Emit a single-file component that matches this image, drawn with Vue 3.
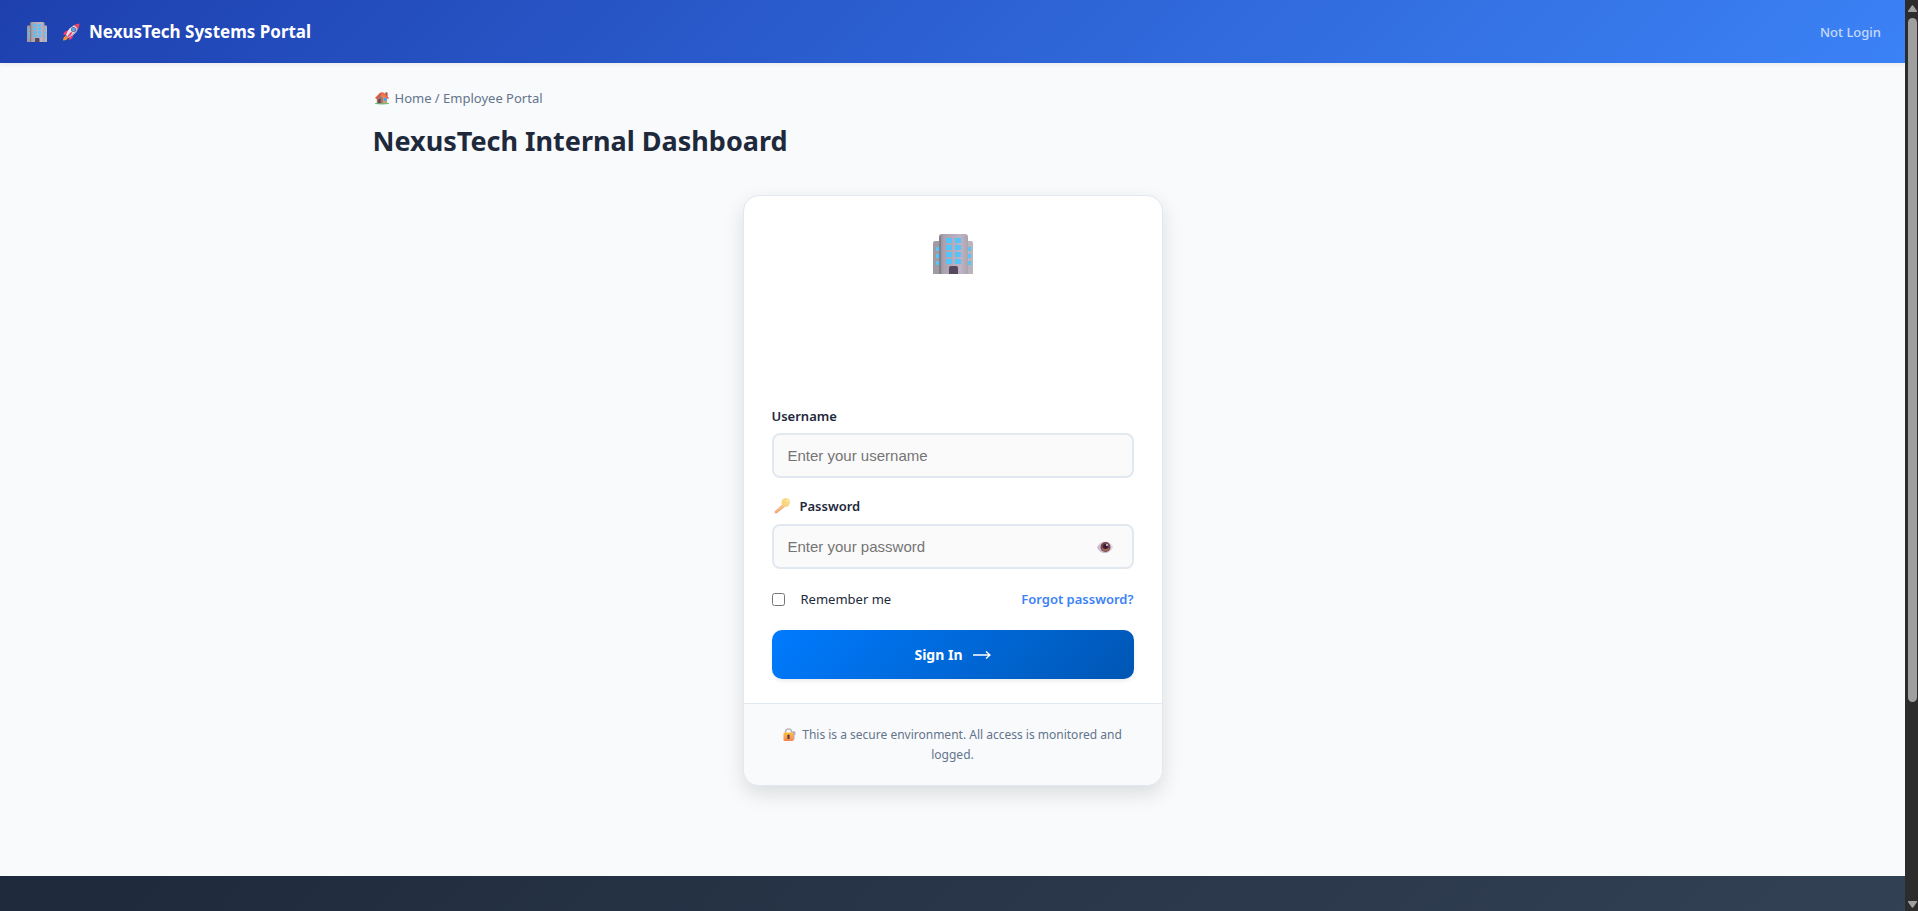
<script setup>
import { ref } from 'vue'

const username = ref('')
const password = ref('')
const remember = ref(false)
const reveal = ref(false)
</script>

<template>
  <svg class="symbols" aria-hidden="true">
    <defs>
      <linearGradient id="wall" x1="0" x2="1">
        <stop offset="0" stop-color="#8f8792" />
        <stop offset=".16" stop-color="#aaa2ae" />
        <stop offset=".75" stop-color="#bfb3c6" />
        <stop offset="1" stop-color="#aba4ad" />
      </linearGradient>
      <linearGradient id="gold" x1="1" y1="0" x2="0" y2="1">
        <stop offset="0" stop-color="#fbe07c" />
        <stop offset=".5" stop-color="#fbd084" />
        <stop offset="1" stop-color="#f2a57d" />
      </linearGradient>
      <linearGradient id="brass" x1="0" y1="0" x2="0" y2="1">
        <stop offset="0" stop-color="#f9c33e" />
        <stop offset="1" stop-color="#fb8352" />
      </linearGradient>
      <radialGradient id="ball" cx=".65" cy=".35" r=".8">
        <stop offset="0" stop-color="#f3eff5" />
        <stop offset="1" stop-color="#b9a8cb" />
      </radialGradient>
    </defs>
    <symbol id="building" viewBox="0 0 40 40">
      <path d="M0 9q0-2 2-2h6v33H0z" fill="#a09aa3" />
      <path d="M32 7h6q2 0 2 2v31h-8z" fill="#b9b3bb" />
      <path d="M6 3q0-3 3-3h23q3 0 3 3v37H6z" fill="url(#wall)" />
      <path d="M6 3v37h2V2z" fill="#857f8b" />
      <g fill="#54c4fa">
        <path d="M13 4h6v5h-6zM22 4h6v5h-6zM13 11h6v5h-6zM22 11h6v5h-6zM13 18h6v5h-6zM22 18h6v5h-6zM13 25h6v5h-6zM22 25h6v5h-6z" />
        <path d="M3 13h3v4H3zM3 20h3v4H3zM3 27h3v4H3zM35 13h3v4h-3zM35 20h3v4h-3zM35 27h3v4h-3z" />
      </g>
      <path d="M16 40v-6q0-2 2-2h5q2 0 2 2v6z" fill="#56495f" />
    </symbol>
    <symbol id="rocket" viewBox="0 0 36 36">
      <path d="M8 25l4 4q-1 6-10 6 0-7 6-10z" fill="#f7912d" />
      <path d="M13 15q-8 0-11 8l10 2zM22 23q1 8-7 11l-3-8z" fill="#ef3c70" />
      <path d="M8 24Q13 6 33 2q0 19-20 27z" fill="#e6e1ea" />
      <path d="M12 28Q27 21 33 2q2 19-21 28z" fill="#b9aec7" />
      <path d="M24 4q5-2 11-3 0 6-3 11z" fill="#f0425c" />
      <circle cx="23" cy="13" r="5" fill="#735b87" />
      <circle cx="23" cy="13" r="3.6" fill="#48adf1" />
      <path d="M18 18l3 1q-3 7-9 9-1-4 6-10z" fill="#f23b74" />
    </symbol>
    <symbol id="house" viewBox="0 0 30 28">
      <path d="M0 25q15-4 30 0v2q-15 2-30 0z" fill="#57c878" />
      <path d="M22 2h5v9h-5z" fill="#a55c4b" />
      <path d="M4 12L14 4l12 9v12H4z" fill="#cf9a76" />
      <path d="M4 14l7-7 6 7v11H4z" fill="#a9786a" />
      <path d="M0 14L11 3q4-3 8 0l11 11-2 2L16 6 3 16z" fill="#e0583f" />
      <path d="M12 4q6-3 14 8l-7 1z" fill="#f37350" />
      <path d="M7 16h5v9H7z" fill="#634159" />
      <path d="M19 14h6v6h-6z" fill="#35a8ef" />
    </symbol>
    <symbol id="key" viewBox="0 0 30 30">
      <path d="M15 12l5 5L5 29q-4 1-4-3z" fill="#f2aa82" />
      <path d="M14 9q0-8 8-9 8 1 8 8-1 9-9 9-3 0-4-1L5 28l-3-3 13-12z" fill="url(#gold)" />
      <circle cx="25" cy="5" r="1.6" fill="#fff4d2" />
    </symbol>
    <symbol id="eye" viewBox="0 0 32 24">
      <path d="M0 13Q5 1 17 1q10 0 15 11-6 12-16 12Q6 24 0 13z" fill="url(#ball)" />
      <circle cx="17" cy="12" r="10" fill="#76464b" />
      <path d="M9 16a9.500 9.500 0 0016 0q-3-4-8-4t-8 4z" fill="#a26454" />
      <circle cx="17" cy="11" r="5" fill="#391a32" />
      <circle cx="20" cy="8" r="2" fill="#efdce8" />
    </symbol>
    <symbol id="lock" viewBox="0 0 26 26">
      <path d="M18 7q5-3 7 2 1 4-2 6v8h-4z" fill="#b9a6cf" />
      <path d="M5 12V8q0-6 6-6t6 6v4" fill="none" stroke="#bdb5bf" stroke-width="3" />
      <rect x="1" y="9" width="20" height="17" rx="2" fill="url(#brass)" />
      <path d="M11 13a2.500 2.500 0 012 4v5H9v-5a2.500 2.500 0 012-4z" fill="#56364a" />
    </symbol>
  </svg>

  <div class="shell">
    <div class="page">
      <header class="topbar">
        <div class="brand">
          <svg class="brand-logo" aria-hidden="true"><use href="#building" /></svg>
          <svg class="brand-rocket" aria-hidden="true"><use href="#rocket" /></svg>
          <span class="brand-name">NexusTech Systems Portal</span>
        </div>
        <span class="status">Not Login</span>
      </header>

      <main class="content">
        <nav class="crumbs" aria-label="Breadcrumb">
          <svg class="crumb-icon" aria-hidden="true"><use href="#house" /></svg>
          <span>Home / Employee Portal</span>
        </nav>
        <h1 class="title">NexusTech Internal Dashboard</h1>

        <section class="card" aria-label="Sign in">
          <div class="hero">
            <svg class="hero-logo" aria-hidden="true"><use href="#building" /></svg>
          </div>
          <form class="form" @submit.prevent>
            <div class="field">
              <label class="label" for="username">Username</label>
              <input id="username" v-model="username" class="input" type="text" placeholder="Enter your username" />
            </div>
            <div class="field">
              <label class="label" for="password">
                <svg class="key" aria-hidden="true"><use href="#key" /></svg>
                Password
              </label>
              <div class="secret">
                <input
                  id="password"
                  v-model="password"
                  class="input"
                  :type="reveal ? 'text' : 'password'"
                  placeholder="Enter your password"
                />
                <button class="reveal" type="button" aria-label="Show password" @click="reveal = !reveal">
                  <svg class="eye" aria-hidden="true"><use href="#eye" /></svg>
                </button>
              </div>
            </div>
            <div class="options">
              <label class="remember" for="remember">
                <input id="remember" v-model="remember" class="check" type="checkbox" />
                Remember me
              </label>
              <a class="forgot" href="#">Forgot password?</a>
            </div>
            <button class="submit" type="submit">
              Sign In
              <svg class="arrow" viewBox="0 0 18 8" aria-hidden="true">
                <path d="M0 4h17M13 0.500L17 4l-4 3.500" fill="none" stroke="currentColor" stroke-width="1.400" />
              </svg>
            </button>
          </form>
          <p class="notice">
            <svg class="lock" aria-hidden="true"><use href="#lock" /></svg>
            This is a secure environment. All access is monitored and logged.
          </p>
        </section>
      </main>

      <footer class="footer"></footer>
    </div>

    <div class="scrollbar" aria-hidden="true">
      <svg class="tip" viewBox="0 0 9 8"><path d="M3.500 1q1-1.500 2 0L9 6v1H0V6z" fill="#9f9f9f" /></svg>
      <div class="track"><div class="thumb"></div></div>
      <svg class="tip" viewBox="0 0 9 8"><path d="M3.500 7q1 1.500 2 0L9 2V1H0v1z" fill="#9f9f9f" /></svg>
    </div>
  </div>
</template>

<style>
body {
  margin: 0;
}
</style>

<style scoped>
.symbols {
  position: absolute;
  width: 0;
  height: 0;
}

.shell {
  display: flex;
  min-height: 100vh;
  font-family: "Noto Sans", "Open Sans", sans-serif;
  color: #1e293b;
  background: #f8fafc;
}

.page {
  display: flex;
  flex: 1;
  flex-direction: column;
  min-width: 0;
}

.topbar {
  display: flex;
  align-items: center;
  justify-content: space-between;
  height: 63px;
  padding: 0 24px;
  color: #fff;
  background: linear-gradient(135deg, #1e40af 0%, #3b82f6 100%);
  box-shadow: 0 2px 4px rgba(0, 0, 0, 0.06);
}

.brand {
  display: flex;
  align-items: center;
  padding-left: 3px;
}

.brand-logo {
  width: 20px;
  height: 20px;
  margin-right: 15px;
}

.brand-rocket {
  width: 18px;
  height: 18px;
  margin-right: 9px;
}

.brand-name {
  font-size: 17px;
  font-weight: 700;
  line-height: 24px;
}

.status {
  font-size: 13px;
  font-weight: 500;
  line-height: 20px;
  opacity: 0.7;
}

.content {
  box-sizing: border-box;
  width: 100%;
  max-width: 1200px;
  margin: 0 auto;
  padding: 25px 20px 90px;
}

.crumbs {
  display: flex;
  align-items: center;
  gap: 6px;
  padding-left: 2px;
  font-size: 13px;
  line-height: 20px;
  color: #64748b;
}

.crumb-icon {
  width: 14px;
  height: 14px;
}

.title {
  margin: 12px 0 34px;
  font-size: 27px;
  font-weight: 700;
  line-height: 41px;
}

.card {
  box-sizing: border-box;
  width: 100%;
  max-width: 420px;
  margin: 0 auto;
  overflow: hidden;
  background: #fff;
  border: 1px solid #e2e8f0;
  border-radius: 16px;
  box-shadow: 0 8px 20px rgba(0, 0, 0, 0.12);
}

.hero {
  display: flex;
  justify-content: center;
  padding: 38px 28px 132px;
}

.hero-logo {
  width: 40px;
  height: 40px;
}

.form {
  padding: 0 28px 24px;
}

.field {
  margin-bottom: 18px;
}

.label {
  display: flex;
  align-items: center;
  margin-bottom: 8px;
  font-size: 13px;
  font-weight: 600;
  line-height: 20px;
}

.field:first-child .label {
  margin-bottom: 7px;
}

.key {
  width: 16px;
  height: 16px;
  margin: 0 10px 0 2px;
}

.input {
  box-sizing: border-box;
  display: block;
  width: 100%;
  height: 45px;
  padding: 0 14px;
  font-family: "Liberation Sans", Arial, sans-serif;
  font-size: 15px;
  color: #1e293b;
  background: #fafafa;
  border: 2px solid #e2e8f0;
  border-radius: 8px;
}

.input::placeholder {
  color: #757575;
}

.secret {
  position: relative;
}

.reveal {
  position: absolute;
  top: 0;
  right: 17px;
  display: flex;
  align-items: center;
  height: 100%;
  padding: 0 4px;
  background: none;
  border: 0;
}

.eye {
  width: 16px;
  height: 12px;
}

.options {
  display: flex;
  align-items: center;
  justify-content: space-between;
  margin: 20px 0;
  font-size: 13px;
  line-height: 21px;
}

.remember {
  display: flex;
  align-items: center;
}

.check {
  width: 13px;
  height: 13px;
  margin: 0 16px 0 0;
}

.forgot {
  font-weight: 600;
  color: #3b82f6;
  text-decoration: none;
}

.submit {
  display: flex;
  align-items: center;
  justify-content: center;
  gap: 10px;
  width: 100%;
  height: 49px;
  padding: 0;
  font-family: inherit;
  font-size: 14px;
  font-weight: 700;
  color: #fff;
  background: linear-gradient(135deg, #007bff 0%, #0056b3 100%);
  border: 0;
  border-radius: 10px;
  box-shadow: 0 2px 4px rgba(0, 0, 0, 0.08);
}

.arrow {
  width: 18px;
  height: 8px;
}

.notice {
  margin: 0;
  padding: 21px 28px 20px;
  font-size: 12px;
  line-height: 20px;
  color: #64748b;
  text-align: center;
  background: #f8fafc;
  border-top: 1px solid #e2e8f0;
}

.lock {
  width: 13px;
  height: 13px;
  margin-right: 3px;
  vertical-align: -2px;
}

.footer {
  flex: 1;
  min-height: 35px;
  background: linear-gradient(135deg, #1e293b 0%, #334155 100%);
}

.scrollbar {
  box-sizing: border-box;
  display: flex;
  flex-direction: column;
  gap: 5px;
  width: 13px;
  padding: 5px 1px 3px 3px;
  background: #2c2c2c;
}

.tip {
  width: 9px;
  height: 8px;
}

.track {
  flex: 1;
}

.thumb {
  height: 78%;
  background: #9f9f9f;
  border-radius: 5px;
}
</style>
